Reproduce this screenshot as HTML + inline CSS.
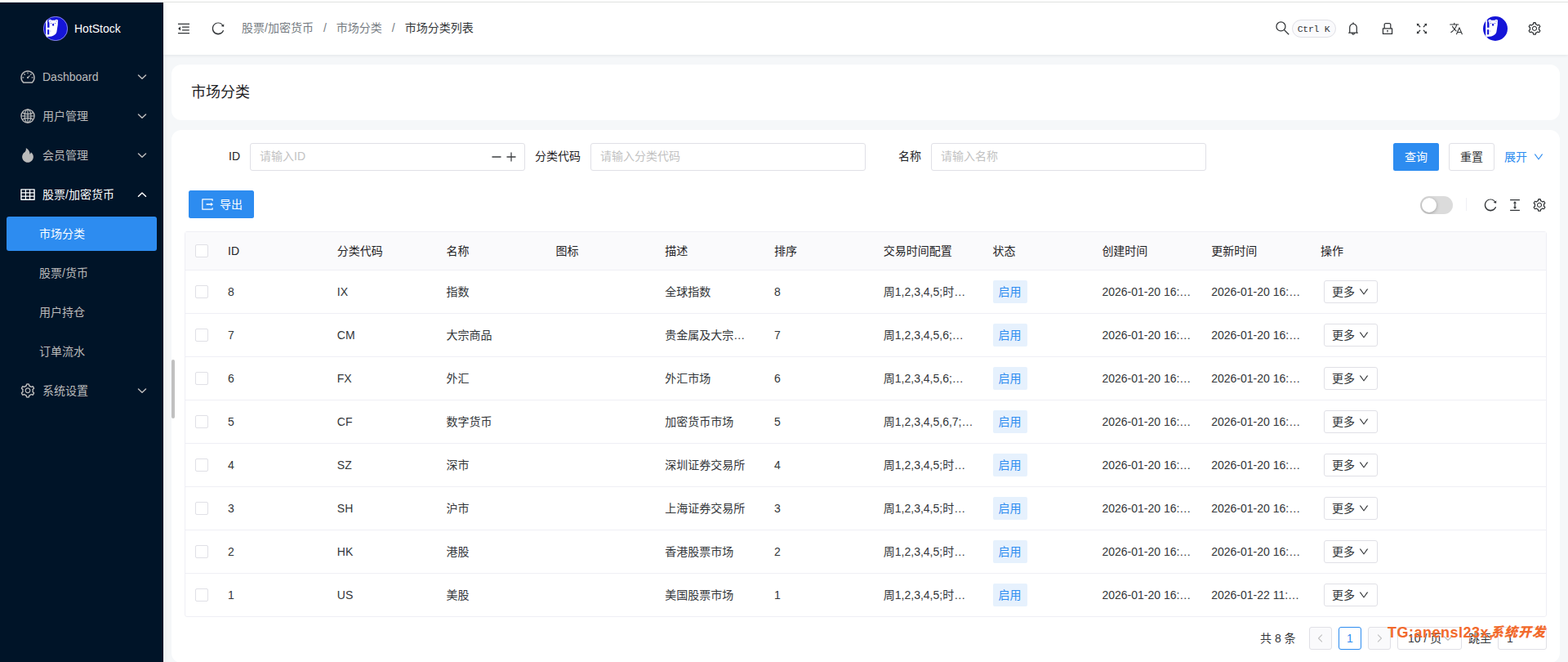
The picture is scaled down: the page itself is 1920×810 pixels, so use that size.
<!DOCTYPE html>
<html lang="zh-CN">
<head>
<meta charset="utf-8">
<title>HotStock - 市场分类列表</title>
<style>
*{box-sizing:border-box;margin:0;padding:0}
html,body{width:1920px;height:810px;overflow:hidden}
body{background:#f5f7f9;font-family:"Liberation Sans","Noto Sans CJK SC",sans-serif;font-size:14px;line-height:22px;color:#333639;position:relative}
svg{display:block;flex:none}
.abs{position:absolute}
/* top strip */
.topstrip{position:absolute;left:0;top:0;width:1920px;height:3px;background:#fff;z-index:30}
.topstrip i{position:absolute;left:200px;right:0;top:2px;height:1px;background:#e0e2df}
/* sider */
.sider{position:absolute;left:0;top:3px;width:200px;height:807px;background:#001428;z-index:20;box-shadow:2px 0 8px 0 rgba(29,35,41,.05)}
.logo{height:64px;display:flex;align-items:center;justify-content:center;padding-left:.8px}
.logo .lg{width:30px;height:30px;margin-right:8px}
.logo h2{font-size:14px;font-weight:400;color:#fff;line-height:22px}
.menu{list-style:none}
.mi{position:relative;height:42px;margin-top:6px;display:flex;align-items:center;padding-left:24px;color:#bbb}
.mi .ic{width:20px;height:20px;margin-right:8px;fill:currentColor}
.mi .ar{position:absolute;right:18px;top:13px;width:16px;height:16px;fill:none;stroke:currentColor;stroke-width:1.5;stroke-linecap:round;stroke-linejoin:round}
.mi.on{color:#fff}
.mi.sub{padding-left:48px}
.mi.sel{color:#fff}
.mi.sel::before{content:"";position:absolute;left:8px;right:8px;top:0;bottom:0;background:#2d8cf0;border-radius:3px}
.mi span{position:relative}
/* header */
.header{position:absolute;left:200px;top:3px;width:1720px;height:64px;background:#fff;z-index:10;box-shadow:0 1px 4px rgba(0,21,41,.08)}
.hi{position:absolute;fill:#333639}
.bc{position:absolute;left:96px;top:-1px;height:64px;display:flex;align-items:center;color:#767c82;white-space:nowrap}
.bc .sep{margin:0 12px}
.bc .cur{color:#333639}
.kbd{position:absolute;left:1382px;top:21px;width:54px;height:22px;border:1px solid #e0e0e6;border-radius:11px;background:#fafafc;font-family:"Liberation Mono",monospace;font-size:11.500px;letter-spacing:-.3px;line-height:22.500px;text-align:center;color:#333639;white-space:pre;text-indent:-1px}
.avatar{position:absolute;left:1616px;top:17px;width:30px;height:30px}
/* scroll thumb */
.thumb{position:absolute;left:210px;top:440px;width:4px;height:72px;border-radius:2px;background:#c0c0c0;z-index:5}
/* cards */
.card{position:absolute;left:210px;width:1700px;background:#fff;border-radius:12px}
.card1{top:79px;height:68px}
.card1 h1{position:absolute;left:24px;top:1px;height:68px;line-height:66px;font-size:18px;font-weight:400;color:#1f2225}
.card2{top:159px;height:652px}
/* form */
.lbl{position:absolute;top:15px;height:34px;line-height:34px;width:80px;padding-right:12px;text-align:right;color:#1f2225;white-space:nowrap}
.inp{position:absolute;top:16px;height:34px;width:337px;border:1px solid #e0e0e6;border-radius:3px;background:#fff;padding:0 11px;line-height:30px;color:#c2c2c2;white-space:nowrap}
.inp svg{position:absolute;top:7px;width:18px;height:18px;fill:none;stroke:#3c3f42;stroke-width:36;stroke-linecap:round}
.btn{position:absolute;height:34px;border-radius:3px;line-height:34px;text-align:center;white-space:nowrap}
.btn.pri{background:#2d8cf0;color:#fff;border-radius:2.500px}
.btn.def{border:1px solid #e0e0e6;line-height:32px;color:#333639;background:#fff}
.lnk{position:absolute;color:#2d8cf0;white-space:nowrap;display:flex;align-items:center}
/* toolbar */
.sw{position:absolute;left:1529px;top:81px;width:40px;height:22px;border-radius:11px;background:#dbdbdb;overflow:hidden}
.sw i{position:absolute;left:2px;top:2px;width:18px;height:18px;border-radius:50%;background:#fff;box-shadow:0 1px 4px 0 rgba(0,0,0,.3),inset 0 0 1px 0 rgba(0,0,0,.05)}
.vd{position:absolute;left:1585px;top:83px;width:1px;height:16px;background:#efeff5}
.ti{position:absolute;width:18px;height:18px;fill:#333639}
/* table */
.tb{position:absolute;left:16px;top:124px;width:1668px;border:1px solid #efeff5;border-radius:3px;border-collapse:separate;border-spacing:0;table-layout:fixed;background:#fff}
.tb th,.tb td{padding:0 12px;text-align:left;font-weight:400;border-bottom:1px solid #efeff5;white-space:nowrap;overflow:hidden;text-overflow:ellipsis;vertical-align:middle}
.tb th{height:47px;background:#fafafc;color:#1f2225}
.tb td{height:53px;color:#333639}
.tb tr:last-child td{border-bottom:none;height:52px}
.tb th:first-child,.tb td:first-child{padding:0 0 0 12px;text-overflow:clip}
.cb{display:block;width:16px;height:16px;border:1px solid #e0e0e6;border-radius:2px;background:#fff}
.tag{display:inline-block;vertical-align:middle;height:28px;line-height:28px;padding:0 7px;border-radius:2px;background:#e6f1fd;color:#2d8cf0}
.more{display:inline-flex;vertical-align:middle;align-items:center;height:28px;margin-left:4px;padding:0 9px;border:1px solid #e0e0e6;border-radius:3px;color:#333639;background:#fff}
.more svg{width:14px;height:14px;margin-left:4px;fill:#333639}
/* pagination */
.pg{position:absolute;top:608px;height:28px;line-height:28px;white-space:nowrap;color:#333639}
.pgb{position:absolute;top:608px;width:28px;height:28px;border:1px solid #e0e0e6;border-radius:3px;background:#fafafc;text-align:center;line-height:26px}
.pgb svg{margin:5px;width:16px;height:16px;fill:none;stroke:#c2c2c2;stroke-width:1.4;stroke-linecap:round;stroke-linejoin:round}
.pgb.cur{border-color:#2d8cf0;color:#2d8cf0;background:#fff}
.pgs{position:absolute;top:608px;height:28px;border:1px solid #e0e0e6;border-radius:3px;background:#fff;line-height:26px;padding:0 12px;color:#333639;white-space:nowrap}
.wm{position:absolute;left:1489px;top:604px;font-size:18px;line-height:22px;font-weight:700;color:#f26a2c;white-space:nowrap;letter-spacing:.5px;z-index:9}
.wm b{font-size:16px;font-style:italic;letter-spacing:1px;margin-left:-3.500px;position:relative;top:-1.500px}
</style>
</head>
<body>
<div class="topstrip"><i></i></div>
<aside class="sider">
  <div class="logo">
    <svg class="lg" viewBox="0 0 30 30"><clipPath id="lgc"><circle cx="15" cy="15" r="15"/></clipPath><circle cx="15" cy="15" r="15" fill="#1515d8"/><g fill="#fff" clip-path="url(#lgc)"><path d="M3.200 0h1.900v30H3.200z"/><circle cx="8.400" cy="5.800" r="2"/><circle cx="16.100" cy="5.800" r="2"/><path d="M7.500 5.600c1.800-1 7.700-1 9.500 0 1.100 1.100 1 3.200.7 5.200l-1.300 8.200c-.4 2.500-2.800 4.700-6.300 5.400l-5 .6v-2.800h2.100v-6H5.100v-2.500h2.400z"/></g><g fill="#1515d8"><ellipse cx="12.100" cy="10.200" rx="1" ry="1.650"/><circle cx="9.600" cy="8.600" r=".5"/><circle cx="14.500" cy="8.600" r=".5"/><circle cx="8.900" cy="18" r=".4"/></g><g fill="#9c9cf0"><circle cx="8.400" cy="5.800" r=".8"/><circle cx="16.100" cy="5.800" r=".8"/></g><circle cx="15" cy="15" r="14.700" fill="none" stroke="#d5d5f8" stroke-width=".6"/></svg>
    <h2>HotStock</h2>
  </div>
  <ul class="menu">
    <li class="mi"><svg class="ic" viewBox="0 0 1024 1024"><path d="M924.8 385.600a446.700 446.700 0 00-96-142.400 446.700 446.700 0 00-142.400-96C631.100 123.800 572.500 112 512 112s-119.100 11.800-174.400 35.200a446.700 446.700 0 00-142.400 96 446.700 446.700 0 00-96 142.400C75.800 440.900 64 499.500 64 560c0 132.700 58.300 257.700 159.900 343.100l1.700 1.400c5.800 4.800 13.100 7.500 20.600 7.500h531.700c7.500 0 14.800-2.700 20.600-7.500l1.700-1.400C901.700 817.700 960 692.700 960 560c0-60.500-11.900-119.100-35.200-174.400zM761.400 836H262.600A371.120 371.120 0 01140 560c0-99.400 38.700-192.800 109-263 70.300-70.300 163.700-109 263-109 99.400 0 192.800 38.700 263 109 70.300 70.300 109 163.700 109 263 0 105.600-44.500 205.500-122.600 276zM623.500 421.500a8.030 8.030 0 00-11.300 0L527.700 506c-18.700-5-39.400-.2-54.100 14.500a55.950 55.950 0 000 79.200 55.950 55.950 0 0079.200 0 55.870 55.870 0 0014.500-54.100l84.500-84.500c3.100-3.100 3.100-8.200 0-11.300l-28.300-28.300zM490 320h44c4.400 0 8-3.600 8-8v-80c0-4.400-3.600-8-8-8h-44c-4.400 0-8 3.600-8 8v80c0 4.400 3.600 8 8 8zm260 218v44c0 4.400 3.600 8 8 8h80c4.400 0 8-3.600 8-8v-44c0-4.400-3.600-8-8-8h-80c-4.400 0-8 3.600-8 8zm12.700-197.200l-31.100-31.100a8.030 8.030 0 00-11.300 0l-56.600 56.600a8.030 8.030 0 000 11.300l31.100 31.100c3.100 3.100 8.200 3.100 11.300 0l56.600-56.600c3.100-3.100 3.100-8.200 0-11.300zm-458.600-31.100a8.030 8.030 0 00-11.300 0l-31.100 31.100a8.030 8.030 0 000 11.300l56.600 56.600c3.100 3.100 8.200 3.100 11.300 0l31.100-31.100c3.100-3.100 3.100-8.200 0-11.300l-56.600-56.600zM262 530h-80c-4.400 0-8 3.600-8 8v44c0 4.400 3.600 8 8 8h80c4.400 0 8-3.600 8-8v-44c0-4.400-3.600-8-8-8z"/></svg><span>Dashboard</span><svg class="ar" viewBox="0 0 16 16"><path d="M3.500 6l4.500 4.300 4.500-4.300"/></svg></li>
    <li class="mi"><svg class="ic" viewBox="0 0 1024 1024" style="fill:none;stroke:currentColor;stroke-width:60"><circle cx="512" cy="512" r="414" stroke-width="68"/><ellipse cx="512" cy="512" rx="200" ry="414"/><path d="M512 98v828M98 512h828M168 300c200 100 488 100 688 0M168 724c200-100 488-100 688 0"/></svg><span>用户管理</span><svg class="ar" viewBox="0 0 16 16"><path d="M3.500 6l4.500 4.300 4.500-4.300"/></svg></li>
    <li class="mi"><svg class="ic" viewBox="0 0 1024 1024"><path d="M834.100 469.200A347.490 347.490 0 00751.200 354l-29.100-26.700a8.090 8.090 0 00-13 3.300l-13 37.300c-8.100 23.400-23 47.300-44.100 70.800-1.400 1.500-3 1.900-4.100 2-1.100.1-2.800-.1-4.300-1.500-1.400-1.200-2.100-3-2-4.800 3.700-60.200-14.300-128.100-53.700-202C555.300 171 510 123.100 453.400 89.700l-41.300-24.300c-5.400-3.200-12.300 1-12 7.300l2.200 48c1.500 32.800-2.300 61.800-11.300 85.900-11 29.500-26.800 56.900-47 81.500a295.640 295.640 0 01-47.500 46.100 352.600 352.600 0 00-100.300 121.500A347.750 347.750 0 00160 610c0 47.200 9.300 92.900 27.700 136a349.400 349.400 0 0075.500 110.900c32.400 32 70 57.200 111.900 74.700C418.500 949.800 464.500 959 512 959s93.500-9.200 136.900-27.300A348.600 348.600 0 00760.800 857c32.400-32 57.800-69.400 75.500-110.900a344.200 344.200 0 0027.700-136c0-48.800-10-96.200-29.900-140.900z"/></svg><span>会员管理</span><svg class="ar" viewBox="0 0 16 16"><path d="M3.500 6l4.500 4.300 4.500-4.300"/></svg></li>
    <li class="mi on"><svg class="ic" viewBox="0 0 1024 1024"><path d="M928 160H96c-17.700 0-32 14.300-32 32v640c0 17.700 14.300 32 32 32h832c17.700 0 32-14.300 32-32V192c0-17.700-14.300-32-32-32zm-40 208H676V232h212v136zm0 224H676V432h212v160zM412 432h200v160H412V432zm200-64H412V232h200v136zm-476 64h212v160H136V432zm0-200h212v136H136V232zm0 424h212v136H136V656zm276 0h200v136H412V656zm476 136H676V656h212v136z"/></svg><span>股票/加密货币</span><svg class="ar" viewBox="0 0 16 16"><path d="M3.500 10.300l4.500-4.300 4.500 4.300"/></svg></li>
    <li class="mi sub sel"><span>市场分类</span></li>
    <li class="mi sub"><span>股票/货币</span></li>
    <li class="mi sub"><span>用户持仓</span></li>
    <li class="mi sub"><span>订单流水</span></li>
    <li class="mi"><svg class="ic" viewBox="0 0 1024 1024"><path d="M924.8 625.700l-65.500-56c3.100-19 4.700-38.400 4.700-57.800s-1.600-38.800-4.700-57.800l65.500-56a32.030 32.030 0 009.300-35.200l-.9-2.600a442.270 442.270 0 00-79.700-137.900l-1.800-2.100a32.120 32.120 0 00-35.100-9.500l-81.300 28.900c-30-24.600-63.500-44-99.700-57.600l-15.700-85a32.050 32.050 0 00-25.800-25.700l-2.700-.5c-52.100-9.400-106.900-9.400-159 0l-2.700.5a32.050 32.050 0 00-25.800 25.700l-15.800 85.400a351.860 351.860 0 00-99 57.400l-81.900-29.100a32 32 0 00-35.100 9.500l-1.800 2.100a446.020 446.020 0 00-79.700 137.900l-.9 2.600c-4.500 12.500-.8 26.500 9.300 35.200l66.300 56.600c-3.100 18.800-4.600 38-4.600 57.100 0 19.200 1.500 38.400 4.600 57.100L99 625.500a32.030 32.030 0 00-9.300 35.200l.9 2.600c18.100 50.400 44.900 96.900 79.700 137.900l1.800 2.100a32.120 32.120 0 0035.100 9.500l81.900-29.100c29.800 24.500 63.100 43.900 99 57.400l15.800 85.400a32.050 32.050 0 0025.800 25.700l2.700.5a449.400 449.400 0 00159 0l2.700-.5a32.050 32.050 0 0025.800-25.700l15.700-85a350 350 0 0099.700-57.600l81.300 28.900a32 32 0 0035.100-9.500l1.800-2.100c34.800-41.100 61.600-87.500 79.700-137.900l.9-2.600c4.500-12.300.8-26.300-9.300-35zM788.300 465.900c2.500 15.100 3.800 30.600 3.800 46.100s-1.300 31-3.800 46.100l-6.600 40.100 74.700 63.900a370.030 370.030 0 01-42.600 73.600L721 702.800l-31.400 25.800c-23.900 19.600-50.500 35-79.300 45.800l-38.100 14.300-17.900 97a377.500 377.500 0 01-85 0l-17.900-97.200-37.800-14.500c-28.500-10.800-55-26.200-78.700-45.700l-31.400-25.900-93.400 33.200c-17-22.900-31.200-47.600-42.600-73.600l75.500-64.500-6.500-40c-2.400-14.900-3.700-30.300-3.700-45.500 0-15.300 1.200-30.600 3.700-45.500l6.500-40-75.500-64.500c11.300-26.100 25.600-50.700 42.600-73.600l93.400 33.200 31.400-25.900c23.700-19.500 50.200-34.900 78.700-45.700l37.900-14.300 17.900-97.200c28.100-3.200 56.800-3.200 85 0l17.900 97 38.100 14.300c28.700 10.800 55.400 26.200 79.300 45.800l31.400 25.800 92.800-32.900c17 22.900 31.200 47.600 42.600 73.600L781.800 426l6.500 39.900zM512 326c-97.200 0-176 78.800-176 176s78.800 176 176 176 176-78.800 176-176-78.800-176-176-176zm79.200 255.200A111.600 111.600 0 01512 614c-29.900 0-58-11.700-79.200-32.800A111.600 111.600 0 01400 502c0-29.900 11.700-58 32.800-79.200C454 401.600 482.100 390 512 390c29.900 0 58 11.600 79.200 32.800A111.600 111.600 0 01624 502c0 29.900-11.700 58-32.800 79.200z"/></svg><span>系统设置</span><svg class="ar" viewBox="0 0 16 16"><path d="M3.500 6l4.500 4.300 4.500-4.300"/></svg></li>
  </ul>
</aside>
<header class="header">
  <svg class="hi" style="left:16px;top:23px" width="18" height="18" viewBox="0 0 1024 1024"><path d="M408 442h480c4.400 0 8-3.600 8-8v-56c0-4.400-3.600-8-8-8H408c-4.400 0-8 3.600-8 8v56c0 4.400 3.600 8 8 8zm-8 204c0 4.400 3.600 8 8 8h480c4.400 0 8-3.600 8-8v-56c0-4.400-3.600-8-8-8H408c-4.400 0-8 3.600-8 8v56zm504-486H120c-4.400 0-8 3.600-8 8v56c0 4.400 3.600 8 8 8h784c4.400 0 8-3.600 8-8v-56c0-4.400-3.600-8-8-8zm0 632H120c-4.400 0-8 3.600-8 8v56c0 4.400 3.600 8 8 8h784c4.400 0 8-3.600 8-8v-56c0-4.400-3.600-8-8-8zM115.400 518.900L271.700 642c5.800 4.600 14.400.5 14.400-6.900V388.900c0-7.400-8.500-11.500-14.400-6.900L115.400 505.100a8.740 8.740 0 000 13.800z"/></svg>
  <svg class="hi" style="left:58px;top:23px" width="18" height="18" viewBox="0 0 1024 1024"><path d="M909.100 209.300l-56.400 44.100C775.800 155.100 656.200 92 521.900 92 290 92 102.300 279.500 102 511.500 101.700 743.700 289.800 932 521.900 932c181.300 0 335.800-115 394.600-276.100 1.500-4.200-.7-8.900-4.900-10.300l-56.700-19.500a8 8 0 00-10.100 4.800c-1.800 5-3.800 10-5.900 14.900-17.300 41-42.100 77.800-73.700 109.400A344.770 344.770 0 01655.900 809c-42.300 17.900-87.400 27-133.800 27-46.500 0-91.500-9.100-133.800-27A341.500 341.500 0 01279 735.400c-31.500-31.600-56.200-68.400-73.500-109.400-17.900-42.400-27-87.400-27-133.900s9.100-91.500 27-133.900c17.300-41 42.100-77.800 73.700-109.400 31.600-31.600 68.400-56.400 109.300-73.800 42.300-17.900 87.400-27 133.800-27 46.500 0 91.500 9.100 133.800 27a341.500 341.500 0 01109.300 73.800c9.900 9.900 19.200 20.400 27.800 31.400l-60.200 47a8 8 0 003 14.100l175.600 43c5 1.200 9.900-2.600 9.900-7.700l.8-180.900c-.1-6.600-7.800-10.300-13-6.200z"/></svg>
  <div class="bc"><span>股票/加密货币</span><span class="sep">/</span><span>市场分类</span><span class="sep">/</span><span class="cur">市场分类列表</span></div>
  <svg class="hi" style="left:1360px;top:21.300px;fill:none;stroke:#333639;stroke-width:62" width="21" height="21" viewBox="0 0 1024 1024"><circle cx="412" cy="412" r="268"/><path d="M606 606l282 282"/></svg>
  <div class="kbd">Ctrl K</div>
  <svg class="hi" style="left:1448px;top:23px" width="18" height="18" viewBox="0 0 1024 1024"><path d="M816 768h-24V428c0-141.100-104.300-257.700-240-277.100V112c0-22.100-17.900-40-40-40s-40 17.900-40 40v38.900c-135.700 19.400-240 136-240 277.100v340h-24c-17.700 0-32 14.300-32 32v32c0 4.400 3.600 8 8 8h216c0 61.800 50.200 112 112 112s112-50.200 112-112h216c4.400 0 8-3.600 8-8v-32c0-17.700-14.300-32-32-32zM512 888c-26.500 0-48-21.500-48-48h96c0 26.500-21.500 48-48 48zM304 768V428c0-55.600 21.600-107.800 60.900-147.100S456.400 220 512 220c55.600 0 107.800 21.600 147.100 60.900S720 372.400 720 428v340H304z"/></svg>
  <svg class="hi" style="left:1490px;top:23px" width="18" height="18" viewBox="0 0 1024 1024"><path d="M832 464h-68V240c0-70.700-57.300-128-128-128H388c-70.700 0-128 57.300-128 128v224h-68c-17.700 0-32 14.300-32 32v384c0 17.700 14.300 32 32 32h640c17.700 0 32-14.300 32-32V496c0-17.700-14.300-32-32-32zM332 240c0-30.900 25.100-56 56-56h248c30.900 0 56 25.100 56 56v224H332V240zm460 600H232V536h560v304zM484 701v53c0 4.400 3.600 8 8 8h40c4.400 0 8-3.600 8-8v-53a48.010 48.010 0 10-56 0z"/></svg>
  <svg class="hi" style="left:1532px;top:23px" width="18" height="18" viewBox="0 0 1024 1024"><path d="M290 236.400l43.900-43.900a8.010 8.010 0 00-4.700-13.600L169 160c-5.100-.6-9.500 3.700-8.900 8.900L179 329.100c.8 6.600 8.900 9.400 13.600 4.700l43.700-43.700L370 423.700c3.100 3.100 8.200 3.100 11.300 0l42.400-42.300c3.100-3.100 3.100-8.200 0-11.300L290 236.400zm352.700 187.300c3.100 3.100 8.200 3.100 11.300 0l133.700-133.600 43.700 43.700a8.010 8.010 0 0013.600-4.700L863.900 169c.6-5.100-3.700-9.500-8.900-8.900L694.800 179c-6.600.8-9.400 8.900-4.700 13.600l43.900 43.900L600.300 370a8.030 8.030 0 000 11.300l42.400 42.400zM845 694.900c-.8-6.600-8.900-9.400-13.600-4.700l-43.700 43.700L654 600.300a8.030 8.030 0 00-11.300 0l-42.400 42.300a8.030 8.030 0 000 11.300L734 787.600l-43.900 43.900a8.010 8.010 0 004.700 13.600L855 864c5.100.6 9.500-3.700 8.900-8.900L845 694.900zm-463.700-94.600a8.030 8.030 0 00-11.300 0L236.300 733.900l-43.700-43.700a8.010 8.010 0 00-13.600 4.700L160.100 855c-.6 5.100 3.700 9.500 8.900 8.900L329.200 845c6.600-.8 9.400-8.900 4.700-13.600L290 787.600 423.700 654c3.100-3.100 3.100-8.200 0-11.300l-42.400-42.400z"/></svg>
  <svg class="hi" style="left:1574px;top:23px;fill:none;stroke:#333639;stroke-width:32;stroke-linecap:round;stroke-linejoin:round" width="18" height="18" viewBox="0 0 512 512"><path d="M48 112h288M192 64v48M272 448l96-224 96 224M301.500 384h133M281.300 112S257 206 199 277 80 384 80 384"/><path d="M256 336s-35-27-72-75-56-85-56-85"/></svg>
  <svg class="avatar" viewBox="0 0 30 30"><clipPath id="avc"><circle cx="15" cy="15" r="15"/></clipPath><circle cx="15" cy="15" r="15" fill="#1515d8"/><g fill="#fff" clip-path="url(#avc)"><path d="M3.200 0h1.900v30H3.200z"/><circle cx="8.400" cy="5.800" r="2"/><circle cx="16.100" cy="5.800" r="2"/><path d="M7.500 5.600c1.800-1 7.700-1 9.500 0 1.100 1.100 1 3.200.7 5.200l-1.300 8.200c-.4 2.500-2.800 4.700-6.300 5.400l-5 .6v-2.800h2.100v-6H5.100v-2.500h2.400z"/></g><g fill="#1515d8"><ellipse cx="12.100" cy="10.200" rx="1" ry="1.650"/><circle cx="9.600" cy="8.600" r=".5"/><circle cx="14.500" cy="8.600" r=".5"/><circle cx="8.900" cy="18" r=".4"/></g><g fill="#9c9cf0"><circle cx="8.400" cy="5.800" r=".8"/><circle cx="16.100" cy="5.800" r=".8"/></g></svg>
  <svg class="hi" style="left:1670px;top:23px" width="18" height="18" viewBox="0 0 1024 1024"><path d="M924.800 625.700l-65.500-56c3.100-19 4.700-38.400 4.700-57.800s-1.600-38.800-4.700-57.800l65.500-56a32.030 32.030 0 009.300-35.200l-.9-2.600a442.270 442.270 0 00-79.700-137.900l-1.800-2.100a32.120 32.120 0 00-35.100-9.500l-81.300 28.900c-30-24.600-63.500-44-99.700-57.600l-15.700-85a32.050 32.050 0 00-25.800-25.700l-2.700-.5c-52.100-9.400-106.900-9.400-159 0l-2.700.5a32.050 32.050 0 00-25.800 25.700l-15.800 85.400a351.860 351.860 0 00-99 57.400l-81.900-29.100a32 32 0 00-35.100 9.500l-1.800 2.100a446.020 446.020 0 00-79.700 137.900l-.9 2.600c-4.500 12.500-.8 26.500 9.300 35.200l66.300 56.600c-3.100 18.800-4.600 38-4.600 57.100 0 19.200 1.500 38.400 4.600 57.100L99 625.500a32.030 32.030 0 00-9.300 35.200l.9 2.600c18.100 50.400 44.900 96.900 79.700 137.900l1.800 2.100a32.120 32.120 0 0035.100 9.500l81.900-29.100c29.800 24.500 63.100 43.900 99 57.400l15.800 85.400a32.050 32.050 0 0025.800 25.700l2.700.5a449.400 449.400 0 00159 0l2.700-.5a32.050 32.050 0 0025.800-25.700l15.700-85a350 350 0 0099.700-57.600l81.300 28.900a32 32 0 0035.100-9.500l1.800-2.100c34.800-41.100 61.600-87.500 79.700-137.900l.9-2.600c4.500-12.300.8-26.300-9.300-35zM788.300 465.900c2.500 15.100 3.800 30.600 3.800 46.100s-1.300 31-3.800 46.100l-6.600 40.100 74.700 63.900a370.030 370.030 0 01-42.600 73.600L721 702.800l-31.400 25.800c-23.900 19.600-50.500 35-79.300 45.800l-38.100 14.300-17.900 97a377.500 377.500 0 01-85 0l-17.900-97.200-37.800-14.500c-28.500-10.800-55-26.200-78.700-45.700l-31.400-25.900-93.400 33.200c-17-22.900-31.200-47.600-42.600-73.600l75.500-64.500-6.500-40c-2.400-14.900-3.700-30.300-3.700-45.500 0-15.300 1.200-30.600 3.700-45.500l6.500-40-75.500-64.500c11.300-26.100 25.600-50.700 42.600-73.600l93.400 33.200 31.400-25.900c23.700-19.500 50.200-34.900 78.700-45.700l37.900-14.300 17.900-97.200c28.100-3.200 56.800-3.200 85 0l17.900 97 38.100 14.300c28.700 10.800 55.400 26.200 79.300 45.800l31.400 25.800 92.800-32.900c17 22.900 31.200 47.600 42.600 73.600L781.800 426l6.500 39.900zM512 326c-97.200 0-176 78.800-176 176s78.800 176 176 176 176-78.800 176-176-78.800-176-176-176zm79.200 255.200A111.600 111.600 0 01512 614c-29.900 0-58-11.700-79.200-32.800A111.600 111.600 0 01400 502c0-29.900 11.700-58 32.800-79.200C454 401.600 482.100 390 512 390c29.900 0 58 11.600 79.200 32.800A111.600 111.600 0 01624 502c0 29.900-11.700 58-32.800 79.200z"/></svg>
</header>
<div class="thumb"></div>
<section class="card card1"><h1>市场分类</h1></section>
<section class="card card2">
  <div class="lbl" style="left:16px">ID</div>
  <div class="inp" style="left:96px">请输入ID<svg style="left:291.700px" viewBox="0 0 512 512"><path d="M400 256H112"/></svg><svg style="left:310.100px" viewBox="0 0 512 512"><path d="M256 112v288M400 256H112"/></svg></div>
  <div class="lbl" style="left:433px">分类代码</div>
  <div class="inp" style="left:513px">请输入分类代码</div>
  <div class="lbl" style="left:850px">名称</div>
  <div class="inp" style="left:930px">请输入名称</div>
  <div class="btn pri" style="left:1496px;top:16px;width:56px">查询</div>
  <div class="btn def" style="left:1564px;top:16px;width:56px">重置</div>
  <div class="lnk" style="left:1632px;top:16px;height:34px">展开<svg style="margin-left:7px;fill:#2d8cf0" width="14" height="14" viewBox="0 0 1024 1024"><path d="M884 256h-75c-5.100 0-9.900 2.500-12.900 6.600L512 654.200 227.900 262.600c-3-4.100-7.800-6.600-12.900-6.600h-75c-6.500 0-10.300 7.400-6.500 12.700l352.600 486.100c12.800 17.600 39 17.600 51.700 0l352.600-486.100c3.900-5.300.1-12.700-6.400-12.700z"/></svg></div>

  <div class="btn pri" style="left:21px;top:74px;width:80px;display:flex;align-items:center;padding-left:14px;text-align:left"><svg style="fill:#fff;margin-right:6px" width="18" height="18" viewBox="0 0 1024 1024"><path d="M888.300 757.400h-53.800c-4.200 0-7.700 3.500-7.700 7.700v61.800H197.100V197.100h629.800v61.800c0 4.200 3.500 7.700 7.700 7.700h53.800c4.200 0 7.700-3.400 7.700-7.700V158.700c0-17-13.700-30.700-30.700-30.700H158.700c-17 0-30.700 13.700-30.700 30.700v706.600c0 17 13.700 30.700 30.700 30.700h706.600c17 0 30.700-13.700 30.700-30.700V765.100c0-4.300-3.500-7.700-7.700-7.700zm18.600-251.700L765 393.700c-5.300-4.200-13-.4-13 6.300v76H438c-4.400 0-8 3.600-8 8v56c0 4.400 3.600 8 8 8h314v76c0 6.700 7.800 10.500 13 6.300l141.900-112a8 8 0 000-12.600z"/></svg>导出</div>
  <div class="sw"><i></i></div>
  <div class="vd"></div>
  <svg class="ti" style="left:1606px;top:83px" viewBox="0 0 1024 1024"><path d="M909.100 209.300l-56.400 44.100C775.800 155.100 656.200 92 521.900 92 290 92 102.300 279.500 102 511.500 101.700 743.700 289.800 932 521.900 932c181.300 0 335.800-115 394.600-276.100 1.500-4.200-.7-8.900-4.900-10.300l-56.700-19.500a8 8 0 00-10.100 4.800c-1.800 5-3.800 10-5.900 14.900-17.300 41-42.100 77.800-73.700 109.400A344.770 344.770 0 01655.900 809c-42.300 17.900-87.400 27-133.800 27-46.500 0-91.500-9.100-133.800-27A341.500 341.500 0 01279 735.400c-31.500-31.600-56.200-68.400-73.500-109.400-17.900-42.400-27-87.400-27-133.900s9.100-91.500 27-133.900c17.300-41 42.100-77.800 73.700-109.400 31.600-31.600 68.400-56.400 109.300-73.800 42.300-17.900 87.400-27 133.800-27 46.500 0 91.500 9.100 133.800 27a341.500 341.500 0 01109.300 73.800c9.900 9.900 19.200 20.400 27.800 31.400l-60.200 47a8 8 0 003 14.100l175.600 43c5 1.200 9.900-2.600 9.900-7.700l.8-180.900c-.1-6.600-7.800-10.300-13-6.200z"/></svg>
  <svg class="ti" style="left:1636px;top:83px" viewBox="0 0 1024 1024"><path d="M840 836H184c-4.400 0-8 3.600-8 8v60c0 4.400 3.600 8 8 8h656c4.400 0 8-3.600 8-8v-60c0-4.400-3.600-8-8-8zm0-724H184c-4.400 0-8 3.600-8 8v60c0 4.400 3.600 8 8 8h656c4.400 0 8-3.600 8-8v-60c0-4.400-3.600-8-8-8zM610.800 378c6 0 9.400-7 5.700-11.700L515.700 238.700a7.140 7.140 0 00-11.300 0L403.600 366.300a7.230 7.230 0 005.700 11.700H476v268h-62.800c-6 0-9.400 7-5.700 11.700l100.800 127.500c2.900 3.700 8.500 3.700 11.300 0l100.800-127.500c3.700-4.700.4-11.700-5.700-11.700H548V378h62.800z"/></svg>
  <svg class="ti" style="left:1666px;top:83px" viewBox="0 0 1024 1024"><path d="M924.800 625.700l-65.500-56c3.100-19 4.700-38.400 4.700-57.800s-1.600-38.800-4.700-57.800l65.500-56a32.030 32.030 0 009.300-35.200l-.9-2.600a442.270 442.270 0 00-79.700-137.900l-1.800-2.100a32.120 32.120 0 00-35.100-9.500l-81.300 28.900c-30-24.600-63.500-44-99.700-57.600l-15.700-85a32.050 32.050 0 00-25.800-25.700l-2.700-.5c-52.100-9.400-106.900-9.400-159 0l-2.700.5a32.050 32.050 0 00-25.800 25.700l-15.800 85.400a351.860 351.860 0 00-99 57.400l-81.900-29.100a32 32 0 00-35.100 9.500l-1.800 2.100a446.020 446.020 0 00-79.700 137.900l-.9 2.600c-4.500 12.500-.8 26.500 9.300 35.200l66.300 56.600c-3.100 18.800-4.600 38-4.600 57.100 0 19.200 1.500 38.400 4.600 57.100L99 625.500a32.030 32.030 0 00-9.300 35.200l.9 2.600c18.100 50.400 44.900 96.900 79.700 137.900l1.800 2.100a32.120 32.120 0 0035.100 9.500l81.900-29.100c29.800 24.500 63.100 43.900 99 57.400l15.800 85.400a32.050 32.050 0 0025.800 25.700l2.700.5a449.400 449.400 0 00159 0l2.700-.5a32.050 32.050 0 0025.800-25.700l15.700-85a350 350 0 0099.700-57.600l81.300 28.900a32 32 0 0035.100-9.500l1.800-2.100c34.800-41.100 61.600-87.500 79.700-137.900l.9-2.600c4.500-12.300.8-26.300-9.300-35zM788.300 465.900c2.500 15.100 3.800 30.600 3.800 46.100s-1.300 31-3.800 46.100l-6.600 40.100 74.700 63.900a370.030 370.030 0 01-42.600 73.600L721 702.800l-31.400 25.800c-23.900 19.600-50.500 35-79.300 45.800l-38.100 14.300-17.900 97a377.500 377.500 0 01-85 0l-17.900-97.200-37.800-14.500c-28.500-10.800-55-26.200-78.700-45.700l-31.400-25.900-93.400 33.200c-17-22.900-31.200-47.600-42.600-73.600l75.500-64.500-6.500-40c-2.400-14.900-3.700-30.300-3.700-45.500 0-15.300 1.200-30.600 3.700-45.500l6.500-40-75.500-64.500c11.300-26.100 25.600-50.700 42.600-73.600l93.400 33.200 31.400-25.900c23.700-19.500 50.200-34.900 78.700-45.700l37.900-14.300 17.900-97.200c28.100-3.200 56.800-3.200 85 0l17.900 97 38.100 14.300c28.700 10.800 55.400 26.200 79.300 45.800l31.400 25.800 92.800-32.900c17 22.900 31.200 47.600 42.600 73.600L781.800 426l6.500 39.900zM512 326c-97.200 0-176 78.800-176 176s78.800 176 176 176 176-78.800 176-176-78.800-176-176-176zm79.200 255.200A111.600 111.600 0 01512 614c-29.900 0-58-11.700-79.200-32.800A111.600 111.600 0 01400 502c0-29.900 11.700-58 32.800-79.200C454 401.600 482.100 390 512 390c29.900 0 58 11.600 79.200 32.800A111.600 111.600 0 01624 502c0 29.900-11.700 58-32.800 79.200z"/></svg>
  <table class="tb">
    <colgroup><col style="width:40px"><col style="width:133.8px"><col style="width:133.8px"><col style="width:133.8px"><col style="width:133.8px"><col style="width:133.8px"><col style="width:133.8px"><col style="width:133.8px"><col style="width:133.8px"><col style="width:133.8px"><col style="width:133.8px"><col></colgroup>
    <thead><tr><th><i class="cb"></i></th><th>ID</th><th>分类代码</th><th>名称</th><th>图标</th><th>描述</th><th>排序</th><th>交易时间配置</th><th>状态</th><th>创建时间</th><th>更新时间</th><th>操作</th></tr></thead>
    <tbody>
      <tr><td><i class="cb"></i></td><td>8</td><td>IX</td><td>指数</td><td></td><td>全球指数</td><td>8</td><td>周1,2,3,4,5;时间00:00-23:59</td><td style="text-overflow:clip"><span class="tag">启用</span></td><td>2026-01-20 16:32:18</td><td>2026-01-20 16:32:18</td><td><span class="more">更多<svg viewBox="0 0 1024 1024"><path d="M884 256h-75c-5.100 0-9.900 2.500-12.900 6.600L512 654.200 227.900 262.600c-3-4.100-7.800-6.600-12.900-6.600h-75c-6.500 0-10.300 7.400-6.500 12.700l352.600 486.100c12.800 17.600 39 17.600 51.700 0l352.600-486.100c3.900-5.300.1-12.700-6.400-12.700z"/></svg></span></td></tr>
      <tr><td><i class="cb"></i></td><td>7</td><td>CM</td><td>大宗商品</td><td></td><td>贵金属及大宗商品市场</td><td>7</td><td>周1,2,3,4,5,6;时间00:00-23:59</td><td style="text-overflow:clip"><span class="tag">启用</span></td><td>2026-01-20 16:32:18</td><td>2026-01-20 16:32:18</td><td><span class="more">更多<svg viewBox="0 0 1024 1024"><path d="M884 256h-75c-5.100 0-9.900 2.500-12.900 6.600L512 654.200 227.900 262.600c-3-4.100-7.800-6.600-12.900-6.600h-75c-6.500 0-10.300 7.400-6.500 12.700l352.600 486.100c12.800 17.600 39 17.600 51.700 0l352.600-486.100c3.900-5.300.1-12.700-6.400-12.700z"/></svg></span></td></tr>
      <tr><td><i class="cb"></i></td><td>6</td><td>FX</td><td>外汇</td><td></td><td>外汇市场</td><td>6</td><td>周1,2,3,4,5,6;时间00:00-23:59</td><td style="text-overflow:clip"><span class="tag">启用</span></td><td>2026-01-20 16:32:18</td><td>2026-01-20 16:32:18</td><td><span class="more">更多<svg viewBox="0 0 1024 1024"><path d="M884 256h-75c-5.100 0-9.900 2.500-12.900 6.600L512 654.200 227.900 262.600c-3-4.100-7.800-6.600-12.900-6.600h-75c-6.500 0-10.300 7.400-6.500 12.700l352.600 486.100c12.800 17.600 39 17.600 51.700 0l352.600-486.100c3.900-5.300.1-12.700-6.400-12.700z"/></svg></span></td></tr>
      <tr><td><i class="cb"></i></td><td>5</td><td>CF</td><td>数字货币</td><td></td><td>加密货币市场</td><td>5</td><td>周1,2,3,4,5,6,7;时间00:00-23:59</td><td style="text-overflow:clip"><span class="tag">启用</span></td><td>2026-01-20 16:32:18</td><td>2026-01-20 16:32:18</td><td><span class="more">更多<svg viewBox="0 0 1024 1024"><path d="M884 256h-75c-5.100 0-9.900 2.500-12.900 6.600L512 654.200 227.900 262.600c-3-4.100-7.800-6.600-12.900-6.600h-75c-6.500 0-10.300 7.400-6.500 12.700l352.600 486.100c12.800 17.600 39 17.600 51.700 0l352.600-486.100c3.900-5.300.1-12.700-6.400-12.700z"/></svg></span></td></tr>
      <tr><td><i class="cb"></i></td><td>4</td><td>SZ</td><td>深市</td><td></td><td>深圳证券交易所</td><td>4</td><td>周1,2,3,4,5;时间09:30-15:00</td><td style="text-overflow:clip"><span class="tag">启用</span></td><td>2026-01-20 16:32:18</td><td>2026-01-20 16:32:18</td><td><span class="more">更多<svg viewBox="0 0 1024 1024"><path d="M884 256h-75c-5.100 0-9.900 2.500-12.900 6.600L512 654.200 227.900 262.600c-3-4.100-7.800-6.600-12.900-6.600h-75c-6.500 0-10.300 7.400-6.500 12.700l352.600 486.100c12.800 17.600 39 17.600 51.700 0l352.600-486.100c3.900-5.300.1-12.700-6.400-12.700z"/></svg></span></td></tr>
      <tr><td><i class="cb"></i></td><td>3</td><td>SH</td><td>沪市</td><td></td><td>上海证券交易所</td><td>3</td><td>周1,2,3,4,5;时间09:30-15:00</td><td style="text-overflow:clip"><span class="tag">启用</span></td><td>2026-01-20 16:32:18</td><td>2026-01-20 16:32:18</td><td><span class="more">更多<svg viewBox="0 0 1024 1024"><path d="M884 256h-75c-5.100 0-9.900 2.500-12.900 6.600L512 654.200 227.900 262.600c-3-4.100-7.800-6.600-12.900-6.600h-75c-6.500 0-10.300 7.400-6.500 12.700l352.600 486.100c12.800 17.600 39 17.600 51.700 0l352.600-486.100c3.900-5.300.1-12.700-6.400-12.700z"/></svg></span></td></tr>
      <tr><td><i class="cb"></i></td><td>2</td><td>HK</td><td>港股</td><td></td><td>香港股票市场</td><td>2</td><td>周1,2,3,4,5;时间09:30-16:00</td><td style="text-overflow:clip"><span class="tag">启用</span></td><td>2026-01-20 16:32:18</td><td>2026-01-20 16:32:18</td><td><span class="more">更多<svg viewBox="0 0 1024 1024"><path d="M884 256h-75c-5.100 0-9.900 2.500-12.900 6.600L512 654.200 227.900 262.600c-3-4.100-7.800-6.600-12.900-6.600h-75c-6.500 0-10.300 7.400-6.500 12.700l352.600 486.100c12.800 17.600 39 17.600 51.700 0l352.600-486.100c3.900-5.300.1-12.700-6.400-12.700z"/></svg></span></td></tr>
      <tr><td><i class="cb"></i></td><td>1</td><td>US</td><td>美股</td><td></td><td>美国股票市场</td><td>1</td><td>周1,2,3,4,5;时间09:30-16:00</td><td style="text-overflow:clip"><span class="tag">启用</span></td><td>2026-01-20 16:32:18</td><td>2026-01-22 11:05:42</td><td><span class="more">更多<svg viewBox="0 0 1024 1024"><path d="M884 256h-75c-5.100 0-9.900 2.500-12.900 6.600L512 654.200 227.900 262.600c-3-4.100-7.800-6.600-12.900-6.600h-75c-6.500 0-10.300 7.400-6.500 12.700l352.600 486.100c12.800 17.600 39 17.600 51.700 0l352.600-486.100c3.900-5.300.1-12.700-6.400-12.700z"/></svg></span></td></tr>
    </tbody>
  </table>
  <div class="pg" style="left:1333px">共 8 条</div>
  <div class="pgb" style="left:1393px"><svg viewBox="0 0 20 20"><path d="M12 4.800L6.900 10l5.100 5.200"/></svg></div>
  <div class="pgb cur" style="left:1429px">1</div>
  <div class="pgb" style="left:1465px"><svg viewBox="0 0 20 20"><path d="M8 4.800l5.100 5.200L8 15.200"/></svg></div>
  <div class="pgs" style="left:1501px;width:79px">10 / 页<svg style="position:absolute;right:8px;top:5px;fill:none;stroke:#c2c2c2;stroke-width:1.300;stroke-linecap:round;stroke-linejoin:round" width="16" height="16" viewBox="0 0 16 16"><path d="M3.500 6l4.500 4.300 4.500-4.300"/></svg></div>
  <div class="pg" style="left:1588px">跳至</div>
  <div class="pgs" style="left:1624px;width:60px;padding-left:10px">1</div>
  <div class="wm">TG:anensl23x,<b>系统开发</b></div>
</section>
</body>
</html>
